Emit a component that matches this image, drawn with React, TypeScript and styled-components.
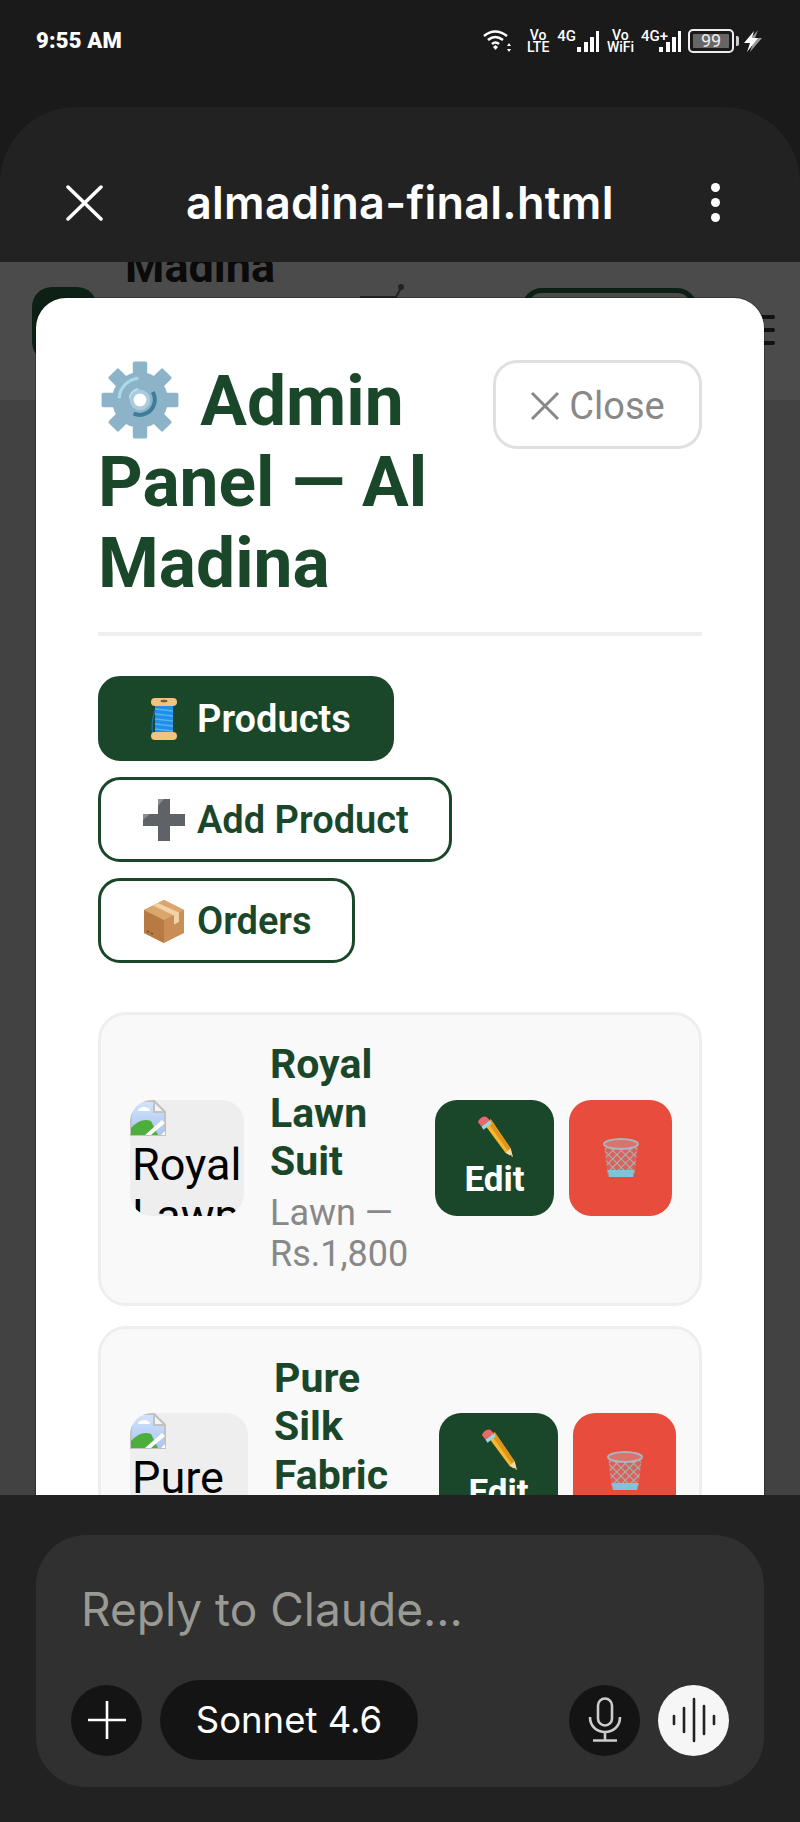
import React from 'react'
import styled, { createGlobalStyle } from 'styled-components'

interface Product {
  name: string
  meta: string
  thumbWidth: number
}

const products: Product[] = [
  { name: 'Royal Lawn Suit', meta: 'Lawn — Rs.1,800', thumbWidth: 114 },
  { name: 'Pure Silk Fabric', meta: 'Silk — Rs.3,500', thumbWidth: 118 },
]

const GlobalStyle = createGlobalStyle`
  html, body {
    margin: 0;
    padding: 0;
    background: #1a1a1a;
  }
  * {
    box-sizing: border-box;
  }`

const Screen = styled.div`
  width: 800px;
  height: 1822px;
  display: flex;
  flex-direction: column;
  background: #1a1a1a;
  overflow: hidden;
  font-family: Roboto, "Liberation Sans", sans-serif;`

const StatusBar = styled.div`
  height: 107px;
  flex-shrink: 0;
  display: flex;
  justify-content: space-between;
  padding: 29px 35px 0 36px;
  color: #fff;`

const Clock = styled.div`
  font-family: Roboto, sans-serif;
  font-size: 22px;
  font-weight: 900;
  line-height: 24px;
  letter-spacing: 0.2px;`

const StatusIcons = styled.div`
  display: flex;
  height: 24px;
  align-items: center;`

const StackLabel = styled.div<{ $width: number; $gap: number }>`
  width: ${p => p.$width}px;
  margin-left: ${p => p.$gap}px;
  font-size: 14px;
  font-weight: 500;
  line-height: 12.5px;
  text-align: center;`

const NetLabel = styled.div<{ $gap: number }>`
  margin-left: ${p => p.$gap}px;
  font-size: 15px;
  font-weight: 500;
  line-height: 14px;
  align-self: flex-start;`

const SignalBars = styled.svg<{ $overlap?: boolean }>`
  width: 24px;
  height: 24px;
  margin-left: ${p => (p.$overlap ? '-10px' : '0')};`

const Battery = styled.div`
  position: relative;
  width: 46px;
  height: 24px;
  margin-left: 6px;
  padding: 3px;
  border: 2px solid #eee;
  border-radius: 5px;
  &::after {
    content: "";
    position: absolute;
    right: -7px;
    top: 5px;
    width: 3px;
    height: 10px;
    background: #ccc;
    border-radius: 0 2px 2px 0;
  }`

const BatteryFill = styled.div`
  height: 100%;
  background: #666;
  border-radius: 1px;
  font-size: 18px;
  line-height: 14px;
  text-align: center;
  color: #eee;`

const Bolt = styled.svg`
  width: 22px;
  height: 24px;
  margin-left: 9px;`

const Sheet = styled.div`
  flex: 1;
  min-height: 0;
  display: flex;
  flex-direction: column;
  background: #222;
  border-radius: 76px 76px 0 0;`

const SheetHeader = styled.div`
  height: 155px;
  flex-shrink: 0;
  display: flex;
  align-items: center;
  padding: 36px 80px 0 66px;
  color: #fff;`

const SheetTitle = styled.div`
  flex: 1;
  margin-left: 83px;
  font-family: Inter, sans-serif;
  font-size: 45px;
  font-weight: 600;
  letter-spacing: 0.25px;
  white-space: nowrap;`

const Dots = styled.div`
  display: flex;
  flex-direction: column;
  gap: 6px;
  span {
    width: 9px;
    height: 9px;
    border-radius: 50%;
    background: #fff;
  }`

const Preview = styled.div`
  position: relative;
  flex: 1;
  min-height: 0;
  overflow: hidden;
  background: #424242;`

const PageNav = styled.div`
  height: 138px;
  display: flex;
  align-items: flex-start;
  padding-left: 32px;
  background: #4b4b4b;`

const PageLogo = styled.div`
  width: 65px;
  height: 75px;
  margin-top: 25px;
  background: #0c2016;
  border-radius: 20px;`

const PageBrand = styled.div`
  width: 235px;
  margin: -18px 0 0 28px;
  font-size: 45px;
  font-weight: 700;
  line-height: 46px;
  color: #0a0a0a;`

const PageCart = styled.svg`
  width: 46px;
  height: 40px;
  margin-top: 20px;
  flex-shrink: 0;`

const PageButton = styled.div`
  width: 175px;
  height: 80px;
  margin: 26px 0 0 116px;
  border: 5px solid #0c2016;
  border-radius: 20px;`

const PageBurger = styled.div`
  width: 26px;
  margin: 53px 0 0 52px;
  display: flex;
  flex-direction: column;
  gap: 9px;
  span {
    height: 4px;
    background: #111;
    border-radius: 2px;
  }`

const Modal = styled.div`
  position: absolute;
  top: 36px;
  left: 36px;
  width: 728px;
  padding: 62px 62px 0;
  background: #fff;
  border-radius: 30px;
  box-shadow: 0 0 0 1px rgba(0, 0, 0, 0.25);`

const ModalHead = styled.div`
  display: flex;
  justify-content: space-between;
  align-items: flex-start;
  padding-bottom: 28px;
  margin-bottom: 40px;
  border-bottom: 4px solid #eee;`

const ModalTitle = styled.h2`
  width: 380px;
  margin: 0;
  font-size: 69.5px;
  font-weight: 700;
  line-height: 81px;
  color: #1a472a;
  svg {
    width: 80px;
    height: 80px;
    margin: 0 3px 0 2px;
    vertical-align: -15px;
  }`

const CloseButton = styled.div`
  width: 209px;
  height: 89px;
  display: flex;
  align-items: center;
  justify-content: center;
  gap: 9px;
  padding-top: 2px;
  background: #fff;
  border: 3px solid #e0e0e0;
  border-radius: 24px;
  color: #888;
  font-size: 38px;`

const TabList = styled.div`
  display: flex;
  flex-direction: column;
  align-items: flex-start;
  gap: 16px;
  margin-bottom: 49px;`

const Tab = styled.div<{ $active?: boolean }>`
  height: 85px;
  display: flex;
  align-items: center;
  gap: 10px;
  padding: 0 40px;
  background: ${p => (p.$active ? '#1a472a' : '#fff')};
  border: 3px solid #1a472a;
  border-radius: 22px;
  color: ${p => (p.$active ? '#fff' : '#1a472a')};
  font-size: 38px;
  font-weight: 600;
  svg {
    width: 46px;
    height: 46px;
  }`

const ProductList = styled.div`
  display: flex;
  flex-direction: column;
  gap: 20px;`

const ProductCard = styled.div`
  display: flex;
  align-items: center;
  padding: 25px 29px 27px;
  background: #f9f9f9;
  border: 3px solid #eee;
  border-radius: 28px;`

const Thumb = styled.div<{ $width: number }>`
  width: ${p => p.$width}px;
  height: 116px;
  flex-shrink: 0;
  overflow: hidden;
  background: #eee;
  border-radius: 22px;
  color: #000;
  font-size: 45px;
  line-height: 51px;
  svg {
    display: block;
    width: 36px;
    height: 36px;
  }`

const ThumbAlt = styled.div`
  padding-left: 2px;
  margin-top: 3px;`

const ProductInfo = styled.div`
  width: 137px;
  flex-shrink: 0;
  margin: 0 28px 0 26px;`

const ProductName = styled.div`
  font-size: 41px;
  font-weight: 700;
  line-height: 48.5px;
  color: #1a472a;`

const ProductMeta = styled.div`
  margin-top: 7px;
  font-size: 36px;
  line-height: 41.5px;
  color: #888;`

const EditButton = styled.div`
  width: 119px;
  height: 116px;
  flex-shrink: 0;
  display: flex;
  flex-direction: column;
  align-items: center;
  padding-top: 15px;
  background: #1a472a;
  border-radius: 22px;
  color: #fff;
  font-size: 35px;
  font-weight: 700;
  line-height: 42px;
  svg {
    width: 44px;
    height: 44px;
  }`

const DeleteButton = styled.div`
  width: 103px;
  height: 116px;
  flex-shrink: 0;
  margin-left: 15px;
  display: flex;
  align-items: center;
  justify-content: center;
  background: #e74c3c;
  border-radius: 22px;
  svg {
    width: 42px;
    height: 42px;
  }`

const Composer = styled.div`
  height: 327px;
  flex-shrink: 0;
  padding: 40px 36px 35px;
  background: #222;`

const ComposerBox = styled.div`
  height: 252px;
  display: flex;
  flex-direction: column;
  justify-content: space-between;
  padding: 47px 35px 27px;
  background: #303030;
  border-radius: 50px;`

const Placeholder = styled.div`
  padding-left: 10px;
  font-family: Inter, sans-serif;
  font-size: 46px;
  line-height: 54px;
  color: #9a9a94;`

const ComposerRow = styled.div`
  display: flex;
  align-items: center;
  gap: 18px;`

const RoundButton = styled.div<{ $light?: boolean }>`
  width: 71px;
  height: 71px;
  display: flex;
  align-items: center;
  justify-content: center;
  background: ${p => (p.$light ? '#f6f6f6' : '#141414')};
  border-radius: 50%;`

const ModelPill = styled.div`
  width: 258px;
  height: 80px;
  display: flex;
  align-items: center;
  justify-content: center;
  background: #141414;
  border-radius: 40px;
  color: #fff;
  font-family: Inter, sans-serif;
  font-size: 36.5px;`

const Spacer = styled.div`
  flex: 1;`

const Gear = () => (
  <svg viewBox="0 0 100 100">
    {[0, 45, 90, 135, 180, 225, 270, 315].map(a => (
      <rect key={a} x="41" y="2" width="18" height="22" rx="2" fill="#8db3c9" transform={`rotate(${a} 50 50)`} />
    ))}
    <circle cx="50" cy="50" r="35" fill="#8db3c9" />
    <path d="M24 48a26 26 0 0 1 24-25" fill="none" stroke="#a8dbe8" strokeWidth="4" />
    <path d="M38 48a12 12 0 0 1 10-11" fill="none" stroke="#bfe4ee" strokeWidth="4" />
    <path d="M66 40a19 19 0 0 1-24 27" fill="none" stroke="#3d7d99" strokeWidth="5" />
    <circle cx="50" cy="50" r="13" fill="#a9cbdc" />
    <circle cx="50" cy="50" r="8" fill="#fff" />
  </svg>
)

const Spool = () => (
  <svg viewBox="0 0 46 46">
    <path d="M14 7h18v32H14z" fill="#1f8fea" />
    <path d="M14 13l18 2M14 18l18 2M14 23l18 2M14 28l18 2M14 33l18 2" stroke="#56b2f5" strokeWidth="1.4" />
    <path d="M12 40c-2-10 0-20 2-26" fill="none" stroke="#1a6fb5" strokeWidth="1.2" />
    <rect x="10" y="2" width="26" height="8" rx="4" fill="#f2c27f" />
    <ellipse cx="23" cy="5" rx="3.500" ry="1.300" fill="#7a5a30" />
    <rect x="10" y="36" width="26" height="8" rx="4" fill="#f2c27f" />
  </svg>
)

const HeavyPlus = () => (
  <svg viewBox="0 0 46 46">
    <path d="M17 2h12v15h15v12H29v15H17V29H2V17h15z" fill="#5f6368" />
    <path d="M17 2h6l-6 7zM2 17h7l-7 6z" fill="#8a8e92" />
  </svg>
)

const PackageBox = () => (
  <svg viewBox="0 0 46 46">
    <path d="M23 2l20 10v23L23 45 3 35V12z" fill="#c98d55" />
    <path d="M23 22L3 12v23l20 10z" fill="#b87a43" />
    <path d="M23 2L3 12l20 10 20-10z" fill="#dba66e" />
    <path d="M12 7.5l21 10v9l5-2.500v-9.500L17 5z" fill="#f0d2a4" />
    <path d="M6 33l2 1M10 35l2 1" stroke="#7c512a" strokeWidth="1.500" />
  </svg>
)

const Pencil = () => (
  <svg viewBox="0 0 42 42">
    <path d="M11 9l6-5 19 28 2 8-7-4z" fill="#f5b82e" />
    <path d="M14 7l3-3 19 28-3 2z" fill="#e2941a" />
    <path d="M31 36l5-4 2 8z" fill="#f3d9a8" />
    <path d="M36 38l2 2-3-1z" fill="#444" />
    <path d="M8 11l8-6 2 3-8 6z" fill="#9ed3e0" />
    <path d="M5 7c0-3 5-7 8-5l3 3-8 6z" fill="#e8686c" />
  </svg>
)

const Trash = () => (
  <svg viewBox="0 0 42 42">
    <defs>
      <pattern id="mesh" width="6" height="6" patternUnits="userSpaceOnUse" patternTransform="rotate(45)">
        <rect width="6" height="6" fill="#d9625a" />
        <path d="M0 0h6M0 0v6" stroke="#a9b4ba" strokeWidth="2" />
      </pattern>
    </defs>
    <path d="M4 7h34l-4 33H8z" fill="url(#mesh)" />
    <path d="M8 33h26l-1 7H9z" fill="#7fc3dc" />
    <ellipse cx="21" cy="7" rx="17" ry="5" fill="#d9746c" stroke="#aab4ba" strokeWidth="2" />
  </svg>
)

const BrokenImage = () => (
  <svg viewBox="0 0 36 36">
    <defs>
      <linearGradient id="sky" x1="0" y1="0" x2="0" y2="1">
        <stop offset="0" stopColor="#d4e3fa" />
        <stop offset="1" stopColor="#a9c6f2" />
      </linearGradient>
    </defs>
    <path d="M1 35V6q0-5 5-5h18l11 11v23z" fill="url(#sky)" stroke="#c2c2c2" strokeWidth="2" />
    <path d="M24 1v11h11z" fill="#f4f4f4" stroke="#c2c2c2" strokeWidth="2" />
    <path d="M8 11a6 4 0 0 1 12 0z" fill="#fff" />
    <path d="M1 35v-7q10-11 20-7l7 14z" fill="#4caf3c" />
    <path d="M15 35l17-15 3 3-14 12zM31 35l4-4v4z" fill="#fff" />
  </svg>
)

const App: React.FC = () => (
  <>
    <GlobalStyle />
    <Screen>
      <StatusBar>
        <Clock>9:55 AM</Clock>
        <StatusIcons>
          <svg width="30" height="24" viewBox="0 0 30 24" fill="none" stroke="#fff" strokeWidth="2.600">
            <path d="M1 7q11-9 23 0M5 11q7-6 15 0M9 15q3.500-3 7 0" />
            <path d="M10 18l2.500-2 2.500 2-2.500 3z" fill="#fff" stroke="none" />
            <path d="M26 14l2 3h-4zM26 23l2-3h-4z" fill="#fff" stroke="none" />
          </svg>
          <StackLabel $width={24} $gap={13}>Vo<br />LTE</StackLabel>
          <NetLabel $gap={7}>4G</NetLabel>
          <SignalBars viewBox="0 0 24 24" fill="#fff">
            <path d="M1 18h4v5H1zM8 13h4v10H8zM14 8h4v15h-4zM20 2h3v21h-3z" />
          </SignalBars>
          <StackLabel $width={27} $gap={7}>Vo<br />WiFi</StackLabel>
          <NetLabel $gap={7}>4G+</NetLabel>
          <SignalBars $overlap viewBox="0 0 24 24" fill="#fff">
            <path d="M1 18h4v5H1zM8 13h4v10H8zM14 8h4v15h-4zM20 2h3v21h-3z" />
          </SignalBars>
          <Battery>
            <BatteryFill>99</BatteryFill>
          </Battery>
          <Bolt viewBox="0 0 22 24">
            <path d="M15 1L4 14h6l-3 9 12-14h-7z" fill="#999" />
            <path d="M11 2L1 14h6l-3 9 11-14H9z" fill="#fff" />
          </Bolt>
        </StatusIcons>
      </StatusBar>
      <Sheet>
        <SheetHeader>
          <svg width="37" height="36" viewBox="0 0 37 36" stroke="#fff" strokeWidth="3.500" strokeLinecap="round">
            <path d="M2 2l33 32M35 2L2 34" />
          </svg>
          <SheetTitle>almadina-final.html</SheetTitle>
          <Dots><span /><span /><span /></Dots>
        </SheetHeader>
        <Preview>
          <PageNav>
            <PageLogo />
            <PageBrand>Madina</PageBrand>
            <PageCart viewBox="0 0 46 40" fill="none" stroke="#222" strokeWidth="2">
              <path d="M0 15h36l5-9" />
              <circle cx="41" cy="5" r="2" fill="#222" />
            </PageCart>
            <PageButton />
            <PageBurger><span /><span /><span /></PageBurger>
          </PageNav>
          <Modal>
            <ModalHead>
              <ModalTitle><Gear /> Admin Panel — Al Madina</ModalTitle>
              <CloseButton>
                <svg width="30" height="30" viewBox="0 0 30 30" stroke="#888" strokeWidth="3">
                  <path d="M2 2l26 26M28 2L2 28" />
                </svg>
                Close
              </CloseButton>
            </ModalHead>
            <TabList>
              <Tab $active><Spool /> Products</Tab>
              <Tab><HeavyPlus /> Add Product</Tab>
              <Tab><PackageBox /> Orders</Tab>
            </TabList>
            <ProductList>
              {products.map(product => (
                <ProductCard key={product.name}>
                  <Thumb $width={product.thumbWidth}>
                    <BrokenImage />
                    <ThumbAlt>{product.name}</ThumbAlt>
                  </Thumb>
                  <ProductInfo>
                    <ProductName>{product.name}</ProductName>
                    <ProductMeta>{product.meta}</ProductMeta>
                  </ProductInfo>
                  <EditButton><Pencil />Edit</EditButton>
                  <DeleteButton><Trash /></DeleteButton>
                </ProductCard>
              ))}
            </ProductList>
          </Modal>
        </Preview>
        <Composer>
          <ComposerBox>
            <Placeholder>Reply to Claude…</Placeholder>
            <ComposerRow>
              <RoundButton>
                <svg width="42" height="42" viewBox="0 0 42 42" stroke="#fff" strokeWidth="2.600">
                  <path d="M21 2v38M2 21h38" />
                </svg>
              </RoundButton>
              <ModelPill>Sonnet 4.6</ModelPill>
              <Spacer />
              <RoundButton>
                <svg width="36" height="46" viewBox="0 0 36 46" fill="none" stroke="#ccc" strokeWidth="2.600">
                  <rect x="11" y="1.500" width="14" height="27" rx="7" />
                  <path d="M3 20c0 20 30 20 30 0M18 35v8M6 43.500h24" />
                </svg>
              </RoundButton>
              <RoundButton $light>
                <svg width="44" height="46" viewBox="0 0 44 46" stroke="#222" strokeWidth="2.600" strokeLinecap="round">
                  <path d="M2 19v8M12 11v24M22 2v42M32 9v28M42 19v8" />
                </svg>
              </RoundButton>
            </ComposerRow>
          </ComposerBox>
        </Composer>
      </Sheet>
    </Screen>
  </>
)

export default App
